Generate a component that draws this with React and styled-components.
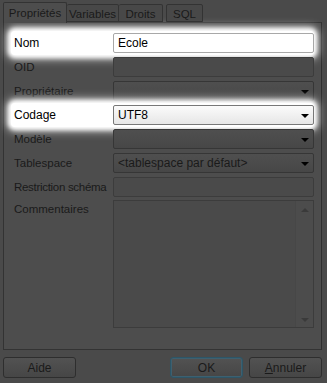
import styled, { createGlobalStyle } from "styled-components";

const GlobalStyle = createGlobalStyle`
  html, body {
    margin: 0;
    padding: 0;
    background: #4a4a4a;
  }
  body {
    font-family: "Liberation Sans", Arial, sans-serif;
    font-size: 11px;
    color: #1a1a1a;
  }
`;

const Dialog = styled.div`
  width: 327px;
  height: 383px;
  box-sizing: border-box;
  padding: 2px 5px 0 3px;
  display: flex;
  flex-direction: column;
  background: #4a4a4a;
`;

const TabBar = styled.div`
  display: flex;
  align-items: flex-end;
  height: 20px;
  position: relative;
  z-index: 1;
`;

const Tab = styled.div`
  box-sizing: border-box;
  width: ${(p) => p.w}px;
  height: ${(p) => (p.active ? "21px" : "18px")};
  margin-bottom: ${(p) => (p.active ? "-1px" : "0")};
  margin-left: ${(p) => (p.gap ? "3px" : "0")};
  display: flex;
  align-items: center;
  justify-content: center;
  white-space: nowrap;
  font-size: 11.5px;
  border: 1px solid #333;
  border-bottom: ${(p) => (p.active ? "none" : "1px solid #333")};
  border-left: ${(p) => (p.first || p.gap ? "1px solid #333" : "none")};
  background: ${(p) => (p.active ? "#4d4d4d" : "#484848")};
  border-radius: 2px 2px 0 0;
  padding-top: ${(p) => (p.active ? "0" : "1px")};
`;

const Panel = styled.div`
  box-sizing: border-box;
  height: 328px;
  border: 1px solid #333;
  border-right-color: #2e2e2e;
  background: #4d4d4d;
  padding: 8px 7px 0 7px;
  display: flex;
  flex-direction: column;
`;

const Row = styled.div`
  display: flex;
  align-items: center;
  height: 24px;
  padding-left: 3px;
  ${(p) =>
    p.glow &&
    `
    background: #fff;
    border-radius: 4px;
    box-shadow: 0 0 4px 3px #fff, 0 0 9px 5px rgba(255,255,255,0.55);
  `}
`;

const Label = styled.div`
  width: 99px;
  flex: none;
  white-space: nowrap;
  font-size: ${(p) => (p.bright ? "12px" : "11.5px")};
  letter-spacing: ${(p) => (p.tight ? "-0.3px" : "0")};
  color: ${(p) => (p.bright ? "#000" : "#1a1a1a")};
`;

const Field = styled.div`
  box-sizing: border-box;
  width: 201px;
  height: 20px;
  border: 1px solid ${(p) => (p.bright ? "#a8a8a8" : "#3c3c3c")};
  border-radius: 2px;
  background: ${(p) => (p.bright ? "#fff" : "#4a4a4a")};
  display: flex;
  align-items: center;
  padding-left: 4px;
  font-size: 12px;
  color: #000;
`;

const Select = styled(Field)`
  justify-content: space-between;
  padding-right: 4px;
  border-color: ${(p) => (p.bright ? "#777" : "#363636")};
  background: ${(p) =>
    p.bright
      ? "linear-gradient(#fbfbfb, #e6e6e6)"
      : "linear-gradient(#4f4f4f, #474747)"};
  color: ${(p) => (p.bright ? "#000" : "#1a1a1a")};
`;

const Arrow = styled.span`
  width: 0;
  height: 0;
  border-left: 4px solid transparent;
  border-right: 4px solid transparent;
  border-top: 4px solid #000;
  margin-top: 1px;
`;

const CommentRow = styled.div`
  display: flex;
  padding-left: 3px;
  margin-top: 1px;
`;

const CommentLabel = styled(Label)`
  padding-top: 3px;
`;

const TextArea = styled.div`
  box-sizing: border-box;
  width: 202px;
  height: 128px;
  border: 1px solid #3c3c3c;
  background: #4a4a4a;
  display: flex;
  justify-content: flex-end;
`;

const ScrollBar = styled.div`
  width: 17px;
  background: #4c4c4c;
  border-left: 1px solid #474747;
  display: flex;
  flex-direction: column;
  justify-content: space-between;
  align-items: center;
  padding: 7px 0 5px;
`;

const ScrollArrow = styled.span`
  width: 0;
  height: 0;
  border-left: 4px solid transparent;
  border-right: 4px solid transparent;
  ${(p) =>
    p.up
      ? "border-bottom: 4px solid #3a3a3a;"
      : "border-top: 4px solid #3a3a3a;"}
`;

const Footer = styled.div`
  display: flex;
  align-items: center;
  padding-top: 7px;
`;

const Button = styled.div`
  box-sizing: border-box;
  width: 73px;
  height: 21px;
  border: 1px solid ${(p) => (p.primary ? "#2d5566" : "#2e2e2e")};
  box-shadow: ${(p) => (p.primary ? "inset 0 0 0 1px #3d6070" : "none")};
  border-radius: 3px;
  background: linear-gradient(#525252, #464646);
  display: flex;
  align-items: center;
  justify-content: center;
  font-size: 12px;
  color: #1a1a1a;
  margin-left: ${(p) => p.ml || 0}px;
  u {
    text-decoration: underline;
  }
`;

export default function App() {
  return (
    <>
      <GlobalStyle />
      <Dialog>
        <TabBar>
          <Tab active first w={64}>Propriétés</Tab>
          <Tab w={52}>Variables</Tab>
          <Tab w={44}>Droits</Tab>
          <Tab gap w={37}>SQL</Tab>
        </TabBar>
        <Panel>
          <Row glow>
            <Label bright>Nom</Label>
            <Field bright>Ecole</Field>
          </Row>
          <Row>
            <Label>OID</Label>
            <Field />
          </Row>
          <Row>
            <Label>Propriétaire</Label>
            <Select>
              <span />
              <Arrow />
            </Select>
          </Row>
          <Row glow>
            <Label bright>Codage</Label>
            <Select bright>
              <span>UTF8</span>
              <Arrow />
            </Select>
          </Row>
          <Row>
            <Label>Modèle</Label>
            <Select>
              <span />
              <Arrow />
            </Select>
          </Row>
          <Row>
            <Label>Tablespace</Label>
            <Select>
              <span>&lt;tablespace par défaut&gt;</span>
              <Arrow />
            </Select>
          </Row>
          <Row>
            <Label tight>Restriction schéma</Label>
            <Field />
          </Row>
          <CommentRow>
            <CommentLabel>Commentaires</CommentLabel>
            <TextArea>
              <ScrollBar>
                <ScrollArrow up />
                <ScrollArrow />
              </ScrollBar>
            </TextArea>
          </CommentRow>
        </Panel>
        <Footer>
          <Button>Aide</Button>
          <Button primary ml={94}>OK</Button>
          <Button ml={6}>
            <span>
              <u>A</u>nnuler
            </span>
          </Button>
        </Footer>
      </Dialog>
    </>
  );
}
